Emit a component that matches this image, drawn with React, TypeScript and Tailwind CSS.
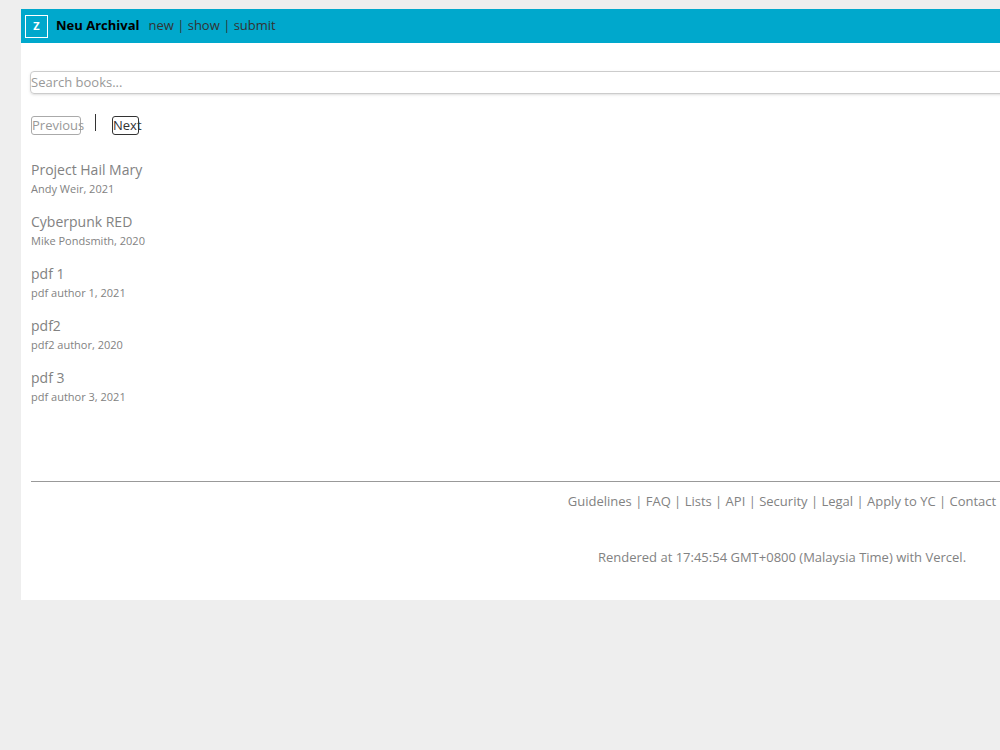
export default function App() {
  const books = [
    ["Project Hail Mary", "Andy Weir, 2021"],
    ["Cyberpunk RED", "Mike Pondsmith, 2020"],
    ["pdf 1", "pdf author 1, 2021"],
    ["pdf2", "pdf2 author, 2020"],
    ["pdf 3", "pdf author 3, 2021"],
  ];
  const links = ["Guidelines", "FAQ", "Lists", "API", "Security", "Legal", "Apply to YC", "Contact"];
  return (
    <div className="w-[1000px] h-[750px] overflow-hidden bg-[#eeeeee] pt-[9px] pl-[21px]" style={{ fontFamily: '"Open Sans", "Noto Sans", sans-serif' }}>
      <div className="w-[1512px] h-[591px] bg-white flex flex-col">
        <div className="h-[34px] bg-[#00a8cc] flex items-center pl-[4px]">
          <div className="w-[23px] h-[23px] border border-white flex items-center justify-center text-white text-[11px] font-bold">Z</div>
          <span className="ml-[8px] text-[13px] font-bold text-black">Neu Archival</span>
          <span className="ml-[9px] text-[13px] text-[#333]">new | show | submit</span>
        </div>
        <div className="pl-[9px] pt-[26px]">
          <input placeholder="Search books..." className="w-[1490px] h-[23px] border border-[#ccc] rounded-[4px] shadow-sm text-[13px] placeholder:text-[#999] outline-none" />
        </div>
        <div className="pl-[10px] pt-[22px] flex items-start">
          <button className="h-[19px] px-[0px] w-[50px] border border-[#aaa] rounded-[3px] text-[13px] leading-[17px] text-[#999]">Previous</button>
          <div className="ml-[14px] w-px h-[17px] bg-[#333] mt-[-2px]"></div>
          <button className="ml-[16px] h-[19px] w-[27px] border border-[#333] rounded-[3px] text-[13px] leading-[17px] text-[#333]">Next</button>
        </div>
        <div className="pl-[10px] pt-[25px] flex flex-col gap-[13px]">
          {books.map(([t, a]) => (
            <div key={t}>
              <div className="text-[14px] leading-[20px] text-[#828282]">{t}</div>
              <div className="text-[11px] leading-[20px] text-[#828282] mt-[-1px]">{a}</div>
            </div>
          ))}
        </div>
        <div className="ml-[10px] mt-[74px] border-t border-[#999] pt-[10px] text-center text-[13px] text-[#828282]">
          {links.join(" | ")}
          <div className="mt-[37px]">Rendered at 17:45:54 GMT+0800 (Malaysia Time) with Vercel.</div>
        </div>
      </div>
    </div>
  );
}
